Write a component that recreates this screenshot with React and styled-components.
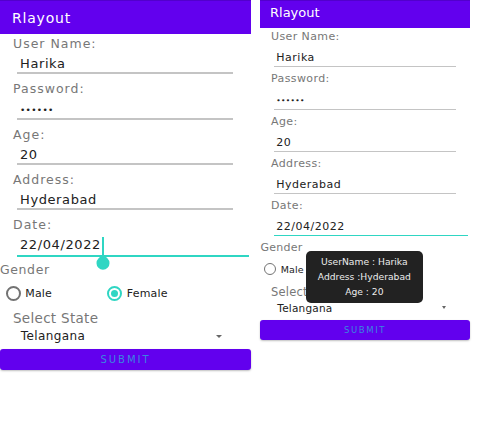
import React from 'react';
import styled, { createGlobalStyle } from 'styled-components';

const GlobalStyle = createGlobalStyle`
  html, body { margin: 0; padding: 0; background: #ffffff; }
  body { font-family: "DejaVu Sans", "Noto Sans", sans-serif; }
`;

const PURPLE = '#6200ee';
const TEAL = '#2fd6c3';
const LABEL = '#777777';
const TEXT = '#212121';

const sizes = {
  lg: {
    width: 251, headerH: 34, headerPt: 1, headerLh: 32, titleSize: 14, titleLs: 0.8, titlePl: 12,
    padL: 13, labelSize: 12.5, labelLs: 1, labelLh: 19,
    inputMl: 4, inputW: 216, dateW: 232, inputPl: 3, inputPt: 3, inputLh: 16, inputSize: 13, inputLs: 0.6,
    lineW: 2, rowGap: 5, focusPb: 2, dotSize: 9, dotLs: 0.3,
    genderMt: 3.2, genderPl: 0,
    radioRowH: 26, radioRowMt: 1, radioPl: 5.7, radioSize: 15, radioBorder: 2, radioDot: 7,
    optionW: 101.6, optionGap: 4.5, optionSize: 11, optionLs: 0.2,
    selectSize: 13.5, selectLs: 0.3, selectLh: 19, selectMt: 2.6,
    spinSize: 12, spinLs: 0.4, spinLh: 16, spinPl: 7.7, spinW: 220, triW: 3.5, triH: 3.5, triMr: 11.3, triMt: 2,
    btnMt: 5.2, btnH: 21, btnSize: 10, btnLs: 2,
  },
  sm: {
    width: 210, headerH: 28, headerPt: 0, headerLh: 24, titleSize: 13, titleLs: 0, titlePl: 10,
    padL: 11, labelSize: 11, labelLs: 0.4, labelLh: 17,
    inputMl: 3, inputW: 182, dateW: 194, inputPl: 2.3, inputPt: 5, inputLh: 15.5, inputSize: 11, inputLs: 0.5,
    lineW: 1.5, rowGap: 3.5, focusPb: 0, dotSize: 7.5, dotLs: 0.3,
    genderMt: 3.4, genderPl: 0.5,
    radioRowH: 24, radioRowMt: 1.6, radioPl: 4, radioSize: 12, radioBorder: 1.5, radioDot: 6,
    optionW: 85, optionGap: 4.7, optionSize: 9.5, optionLs: 0.1,
    selectSize: 11.5, selectLs: 0.2, selectLh: 17, selectMt: 2.5,
    spinSize: 10.5, spinLs: 0.2, spinLh: 14, spinPl: 6.3, spinW: 185, triW: 2.5, triH: 3, triMr: 10.5, triMt: 0,
    btnMt: 4.6, btnH: 20, btnSize: 8.5, btnLs: 1.6,
  },
};

const v = (key) => (p) => sizes[p.$s][key];
const px = (key) => (p) => `${sizes[p.$s][key]}px`;

const Screen = styled.div`
  display: flex;
  align-items: flex-start;
  gap: 9px;
  width: 500px;
  height: 428px;
  background: #fff;
`;

const Phone = styled.div`
  position: relative;
  display: flex;
  flex-direction: column;
  width: ${px('width')};
  flex: none;
  background: #fff;
`;

const AppBar = styled.div`
  box-sizing: border-box;
  height: ${px('headerH')};
  padding-top: ${px('headerPt')};
  padding-left: ${px('titlePl')};
  background: ${PURPLE};
  border-top: 1px solid #5200cc;
  color: #ffffff;
  font-size: ${px('titleSize')};
  letter-spacing: ${px('titleLs')};
  line-height: ${px('headerLh')};
`;

const Form = styled.div`
  display: flex;
  flex-direction: column;
  gap: ${px('rowGap')};
  padding-left: ${px('padL')};
`;

const Field = styled.div`
  display: flex;
  flex-direction: column;
`;

const Label = styled.div`
  color: ${LABEL};
  font-size: ${px('labelSize')};
  letter-spacing: ${px('labelLs')};
  line-height: ${px('labelLh')};
  white-space: nowrap;
`;

const Input = styled.div`
  box-sizing: border-box;
  margin-left: ${px('inputMl')};
  width: ${(p) => (p.$focused ? v('dateW')(p) : v('inputW')(p))}px;
  padding-top: ${px('inputPt')};
  padding-left: ${px('inputPl')};
  padding-bottom: ${(p) => (p.$focused ? v('focusPb')(p) : 0)}px;
  color: ${TEXT};
  font-size: ${px('inputSize')};
  letter-spacing: ${px('inputLs')};
  line-height: ${px('inputLh')};
  border-bottom: ${px('lineW')} solid ${(p) => (p.$focused ? TEAL : '#c4c4c4')};
  white-space: nowrap;
`;

const Dots = styled.span`
  font-size: ${px('dotSize')};
  letter-spacing: ${px('dotLs')};
`;

const CaretAnchor = styled.span`
  position: relative;
  display: inline-block;
  width: 3px;
  height: 0;
`;

const CaretLine = styled.span`
  position: absolute;
  left: 1px;
  top: -12px;
  width: 2px;
  height: 20px;
  background: ${TEAL};
`;

const CaretHandle = styled.svg`
  position: absolute;
  left: -6px;
  top: 4.6px;
  width: 16px;
  height: 16px;
`;

const GenderLabel = styled(Label)`
  margin-top: ${px('genderMt')};
  padding-left: ${px('genderPl')};
  letter-spacing: ${(p) => v('labelLs')(p) * 0.6}px;
`;

const RadioGroup = styled.div`
  display: flex;
  align-items: center;
  height: ${px('radioRowH')};
  margin-top: ${px('radioRowMt')};
  padding-left: ${px('radioPl')};
`;

const RadioOption = styled.label`
  display: flex;
  align-items: center;
  gap: ${px('optionGap')};
  width: ${(p) => (p.$fixed ? `${v('optionW')(p)}px` : 'auto')};
  visibility: ${(p) => (p.$covered ? 'hidden' : 'visible')};
  color: ${TEXT};
  font-size: ${px('optionSize')};
  letter-spacing: ${px('optionLs')};
`;

const RadioCircle = styled.span`
  box-sizing: border-box;
  display: grid;
  place-items: center;
  width: ${px('radioSize')};
  height: ${px('radioSize')};
  border-radius: 50%;
  border: ${px('radioBorder')} solid ${(p) => (p.$checked ? TEAL : '#737373')};
  &::after {
    content: '';
    display: ${(p) => (p.$checked ? 'block' : 'none')};
    width: ${px('radioDot')};
    height: ${px('radioDot')};
    border-radius: 50%;
    background: ${TEAL};
  }
`;

const SelectBlock = styled.div`
  display: flex;
  flex-direction: column;
  padding-left: ${px('padL')};
`;

const SelectLabel = styled.div`
  margin-top: ${px('selectMt')};
  color: ${LABEL};
  font-size: ${px('selectSize')};
  letter-spacing: ${px('selectLs')};
  line-height: ${px('selectLh')};
  white-space: nowrap;
`;

const Spinner = styled.div`
  box-sizing: border-box;
  display: flex;
  align-items: center;
  justify-content: space-between;
  width: ${px('spinW')};
  padding-left: ${px('spinPl')};
  padding-right: ${px('triMr')};
  color: ${TEXT};
  font-size: ${px('spinSize')};
  letter-spacing: ${px('spinLs')};
  line-height: ${px('spinLh')};
`;

const DropArrow = styled.span`
  width: 0;
  height: 0;
  margin-top: ${px('triMt')};
  border-left: ${px('triW')} solid transparent;
  border-right: ${px('triW')} solid transparent;
  border-top: ${px('triH')} solid #666;
`;

const SubmitButton = styled.button`
  display: block;
  width: 100%;
  height: ${px('btnH')};
  margin: ${px('btnMt')} 0 0 0;
  padding: 0;
  border: none;
  border-radius: 3px;
  background: ${PURPLE};
  box-shadow: 0 1px 2px rgba(0, 0, 0, 0.25);
  color: #3a86e0;
  font-family: "DejaVu Sans", "Noto Sans", sans-serif;
  font-size: ${px('btnSize')};
  letter-spacing: ${px('btnLs')};
  line-height: ${px('btnH')};
  text-align: center;
`;

const Toast = styled.div`
  position: absolute;
  left: 45.7px;
  top: 251px;
  box-sizing: border-box;
  width: 117.3px;
  height: 52px;
  padding-top: 4.4px;
  border-radius: 5px;
  background: #222222;
  color: #ececec;
  font-size: 9.2px;
  line-height: 14.8px;
  text-align: center;
  white-space: nowrap;
`;

const fields = [
  { label: 'User Name:', value: 'Harika' },
  { label: 'Password:', value: '••••••', secret: true },
  { label: 'Age:', value: '20' },
  { label: 'Address:', value: 'Hyderabad' },
  { label: 'Date:', value: '22/04/2022', focused: true },
];

function FormScreen({ s, showCaret, toast }) {
  return (
    <Phone $s={s}>
      <AppBar $s={s}>Rlayout</AppBar>
      <Form $s={s}>
        {fields.map((f) => (
          <Field key={f.label}>
            <Label $s={s}>{f.label}</Label>
            <Input $s={s} $focused={f.focused}>
              {f.secret ? <Dots $s={s}>{f.value}</Dots> : f.value}
              {f.focused && showCaret && (
                <CaretAnchor>
                  <CaretLine />
                  <CaretHandle viewBox="0 0 16 16">
                    <path d="M8 0 L12.6 4.6 A6.5 6.5 0 1 1 3.4 4.6 Z" fill={TEAL} />
                  </CaretHandle>
                </CaretAnchor>
              )}
            </Input>
          </Field>
        ))}
      </Form>
      <GenderLabel $s={s}>Gender</GenderLabel>
      <RadioGroup $s={s}>
        <RadioOption $s={s} $fixed>
          <RadioCircle $s={s} />
          Male
        </RadioOption>
        <RadioOption $s={s} $covered={toast}>
          <RadioCircle $s={s} $checked />
          Female
        </RadioOption>
      </RadioGroup>
      <SelectBlock $s={s}>
        <SelectLabel $s={s}>Select State</SelectLabel>
        <Spinner $s={s}>
          <span>Telangana</span>
          <DropArrow $s={s} />
        </Spinner>
      </SelectBlock>
      <SubmitButton $s={s}>SUBMIT</SubmitButton>
      {toast && (
        <Toast>
          <div>UserName : Harika</div>
          <div>Address :Hyderabad</div>
          <div>Age : 20</div>
        </Toast>
      )}
    </Phone>
  );
}

export default function App() {
  return (
    <>
      <GlobalStyle />
      <Screen>
        <FormScreen s="lg" showCaret />
        <FormScreen s="sm" toast />
      </Screen>
    </>
  );
}
